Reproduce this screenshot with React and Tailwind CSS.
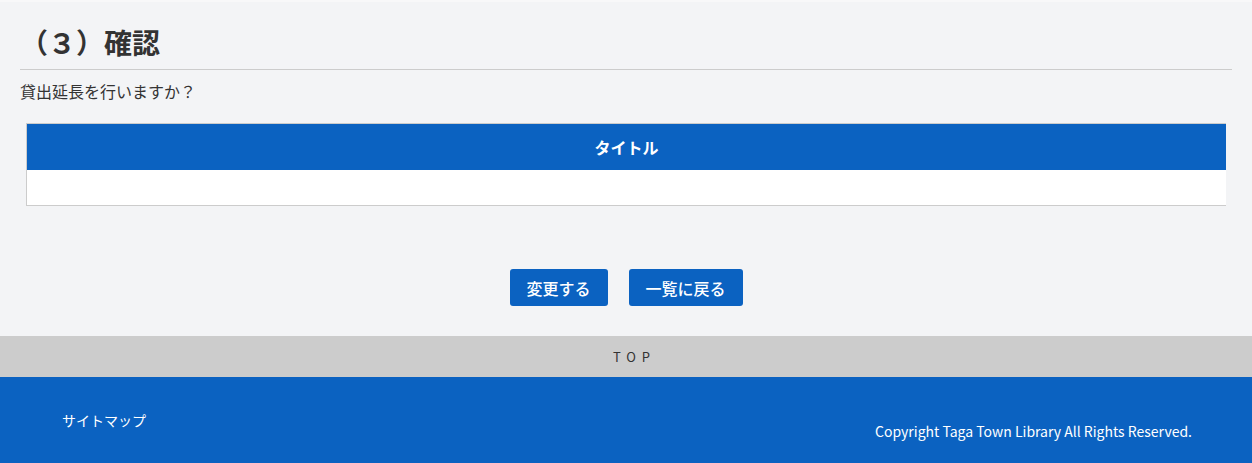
const font = { fontFamily: '"Noto Sans CJK JP", "Noto Sans", sans-serif' };

function ActionButton({ children, width }) {
  return (
    <button
      type="button"
      className={`h-[37px] ${width} rounded-[3px] bg-[#0b62c1] text-[16px] font-medium text-white`}
    >
      {children}
    </button>
  );
}

export default function App() {
  return (
    <div className="w-[1252px] bg-[#f3f4f6] text-[#333]" style={font}>
      <div className="h-[2px] bg-[#f8f8f9]" />
      <main className="px-5">
        <h1 className="border-b border-[#cccccc] pb-[9px] pt-[22px] text-[28px] font-bold leading-[36px] text-[#333]">
          （３）確認
        </h1>
        <p className="mt-[10px] text-[16px] leading-[22px]">貸出延長を行いますか？</p>

        <div className="mx-[6px] mt-[21px] border-b border-l border-t border-[#cccccc]">
          <div className="flex h-[46px] items-center justify-center bg-[#0b62c1] text-[16px] font-bold text-white">
            タイトル
          </div>
          <div className="h-[35px] bg-white" />
        </div>

        <div className="flex justify-center gap-[21px] pb-[30px] pt-[63px]">
          <ActionButton width="w-[98px]">変更する</ActionButton>
          <ActionButton width="w-[114px]">一覧に戻る</ActionButton>
        </div>
      </main>

      <div className="flex h-[41px] items-center justify-center bg-[#cccccc] pl-[17px] text-[13px] tracking-[0.45em] text-[#333]">
        TOP
      </div>

      <footer className="flex h-[86px] items-start justify-between bg-[#0b62c1] pl-[62px] pr-[60px] pt-[33px] text-white">
        <a className="text-[14px] leading-[20px]">サイトマップ</a>
        <p className="mt-[11px] text-[14px] leading-[20px]">
          Copyright Taga Town Library All Rights Reserved.
        </p>
      </footer>
    </div>
  );
}
